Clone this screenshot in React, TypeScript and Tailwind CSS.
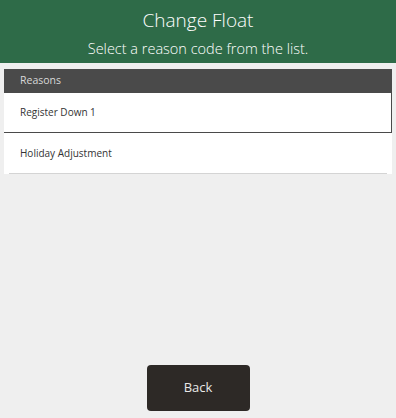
import React from "react";

const reasons = ["Register Down 1", "Holiday Adjustment"];

export default function App() {
  return (
    <div className="flex h-[418px] w-[396px] flex-col bg-[#efefef] font-['Open_Sans',sans-serif]">
      {/* Header */}
      <div className="flex h-[63px] flex-col items-center bg-[#2e6b48] pt-[7px] text-white">
        <h1 className="text-[19px] font-light leading-[26px]">Change Float</h1>
        <p className="mt-[5px] text-[14.5px] font-light leading-[22px]">
          Select a reason code from the list.
        </p>
      </div>

      {/* Reasons list */}
      <div className="mx-[4px] mt-[6px] w-[388px]">
        <div className="flex h-[24px] items-center bg-[#4a4a4a] pl-[16px] text-[10.5px] text-[#d8d8d8]">
          Reasons
        </div>
        {reasons.map((reason, i) => (
          <div
            key={reason}
            className={
              i === 0
                ? "flex h-[40px] items-center border-r border-b border-[#4a4a4a] bg-white pl-[16px] text-[10px] text-[#333]"
                : "flex h-[40px] items-center bg-white pl-[16px] text-[10px] text-[#333]"
            }
          >
            {reason}
          </div>
        ))}
        <div className="h-px bg-white px-[5px]">
          <div className="h-px bg-[#d4d4d4]" />
        </div>
      </div>

      <div className="flex-1" />

      {/* Back button */}
      <div className="flex justify-center pb-[7px]">
        <button className="h-[46px] w-[103px] rounded-[4px] bg-[#2d2926] text-[13px] text-[#e8e8e8]">
          Back
        </button>
      </div>
    </div>
  );
}
